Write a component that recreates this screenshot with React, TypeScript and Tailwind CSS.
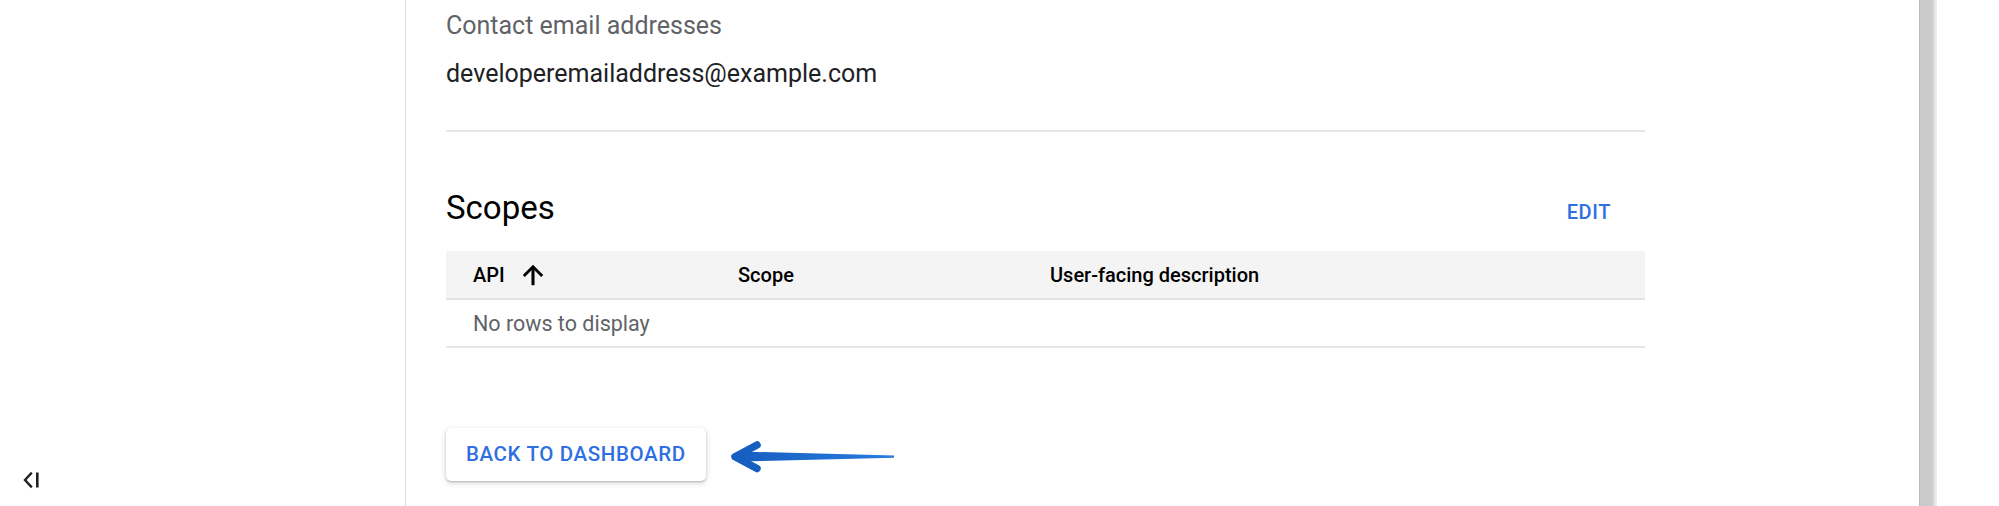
import React from "react";

function CollapseIcon() {
  return (
    <svg width="18" height="17" viewBox="0 0 18 17" className="block">
      <path d="M8 1.5 L2 8 L8 14.5" fill="none" stroke="#202124" strokeWidth="2.4" strokeLinecap="square" />
      <rect x="13" y="0.5" width="2.6" height="15" fill="#202124" />
    </svg>
  );
}

function SortArrow() {
  return (
    <svg width="30" height="30" viewBox="0 0 24 24" className="block">
      <path d="M4 12l1.41 1.41L11 7.83V20h2V7.83l5.58 5.59L20 12l-8-8-8 8z" fill="#000" stroke="#000" strokeWidth="0.4" />
    </svg>
  );
}

function PointerArrow() {
  return (
    <svg width="166" height="34" viewBox="0 0 166 34" className="block">
      <defs>
        <linearGradient id="shaft" x1="0" x2="1" y1="0" y2="0">
          <stop offset="0" stopColor="#155fc0" />
          <stop offset="1" stopColor="#2a7be0" />
        </linearGradient>
      </defs>
      <path d="M10 11.5 L164 15.6 L164 17.8 L10 21.5 Z" fill="url(#shaft)" />
      <path d="M27 5 L5 16.7 L27 28.5" fill="none" stroke="#155fc0" strokeWidth="7.5" strokeLinecap="round" strokeLinejoin="round" />
    </svg>
  );
}

export default function App() {
  return (
    <div className="flex h-[506px] w-full overflow-hidden bg-white font-['Roboto',sans-serif] text-[#202124]">
      {/* left rail */}
      <aside className="flex w-[406px] shrink-0 flex-col justify-end border-r border-[#dadce0] pb-[17px] pl-[23px]">
        <CollapseIcon />
      </aside>

      {/* main panel */}
      <main className="flex-1 pl-[40px] pt-[10px]">
        <div className="w-[1199px]">
          <div className="text-[25px] leading-[32px] text-[#5f6368]">Contact email addresses</div>
          <div className="mt-[16px] text-[25px] leading-[32px] text-[#202124]">developeremailaddress@example.com</div>

          <div className="mt-[40px] border-t-2 border-[#e6e6e6]" />

          <div className="mt-[57px] flex items-baseline justify-between pr-[34px]">
            <h2 className="text-[33px] font-normal leading-[38px] text-[#000]">Scopes</h2>
            <button type="button" className="text-[20px] font-medium tracking-[0.03em] text-[#2f6fe0]">
              EDIT
            </button>
          </div>

          <div className="mt-[24px]">
            <div className="flex h-[49px] items-center border-b-2 border-[#e3e3e3] bg-[#f4f4f4] pl-[27px] text-[20px] font-medium text-[#000]">
              <div className="flex w-[265px] items-center gap-[13px]">
                <span>API</span>
                <SortArrow />
              </div>
              <div className="w-[312px]">Scope</div>
              <div>User-facing description</div>
            </div>
            <div className="flex h-[48px] items-center border-b-2 border-[#e6e6e6] pl-[27px] pt-[3px] text-[21.5px] text-[#5f6368]">
              No rows to display
            </div>
          </div>

          <div className="mt-[80px] flex items-center">
            <button
              type="button"
              className="h-[53px] rounded-[5px] bg-white px-[20px] text-[20.5px] font-medium tracking-[0.03em] text-[#2f6fe0] shadow-[0_1px_2px_rgba(60,64,67,0.3),0_2px_5px_1px_rgba(60,64,67,0.15)]"
            >
              BACK TO DASHBOARD
            </button>
            <div className="ml-[24px] mt-[4px]">
              <PointerArrow />
            </div>
          </div>
        </div>
      </main>

      {/* right edge */}
      <div className="flex w-[80px] shrink-0">
        <div className="w-[14px] border-l border-[#bcbcbc] bg-[#cbcbcb]" />
        <div className="w-[2px] bg-[#dcdcdc]" />
        <div className="w-[2px] bg-[#ececec]" />
        <div className="flex-1 bg-white" />
      </div>
    </div>
  );
}
